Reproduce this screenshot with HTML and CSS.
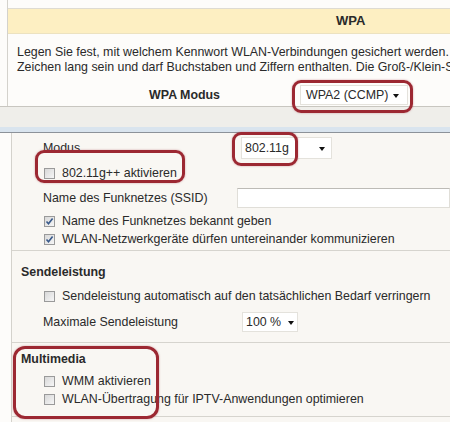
FILE: index.html
```html
<!DOCTYPE html>
<html>
<head>
<meta charset="utf-8">
<link rel="stylesheet" href="styles.css">
</head>
<body>
<div class="page">
  <div class="top">
    <div class="topgap"></div>
    <div class="head">WPA</div>
    <div class="desc">
      <div class="line">Legen Sie fest, mit welchem Kennwort WLAN-Verbindungen gesichert werden. Das Kennwort muss 8 bis 63</div>
      <div class="line">Zeichen lang sein und darf Buchstaben und Ziffern enthalten. Die Groß-/Klein-Schreibung wird beachtet.</div>
    </div>
    <div class="moderow">
      <div class="modelabel">WPA Modus</div>
      <div class="sel sel-wpa"><span>WPA2 (CCMP)</span><span class="arrow"></span></div>
    </div>
  </div>
  <div class="band"></div>
  <div class="stripe"></div>
  <div class="panel">
    <div class="group g1">
      <div class="row r-modus">
        <div class="lbl">Modus</div>
        <div class="sel sel-modus"><span>802.11g</span><span class="arrow"></span></div>
      </div>
      <div class="row r-cb1"><span class="cb"></span><span>802.11g++ aktivieren</span></div>
      <div class="row r-ssid">
        <div class="lbl">Name des Funknetzes (SSID)</div>
        <div class="input"></div>
      </div>
      <div class="row r-cb2"><span class="cb checked"><svg viewBox="0 0 11 11" width="11" height="11"><path d="M2.5 5.5 L4.5 7.8 L8.6 2.6" fill="none" stroke="#3a5a8a" stroke-width="1.6"/></svg></span><span>Name des Funknetzes bekannt geben</span></div>
      <div class="row r-cb3"><span class="cb checked"><svg viewBox="0 0 11 11" width="11" height="11"><path d="M2.5 5.5 L4.5 7.8 L8.6 2.6" fill="none" stroke="#3a5a8a" stroke-width="1.6"/></svg></span><span>WLAN-Netzwerkgeräte dürfen untereinander kommunizieren</span></div>
    </div>
    <div class="group g2">
      <div class="h">Sendeleistung</div>
      <div class="row r-cb4"><span class="cb"></span><span>Sendeleistung automatisch auf den tatsächlichen Bedarf verringern</span></div>
      <div class="row r-max">
        <div class="lbl">Maximale Sendeleistung</div>
        <div class="sel sel-pct"><span>100 %</span><span class="arrow"></span></div>
      </div>
    </div>
    <div class="group g3">
      <div class="h h3">Multimedia</div>
      <div class="row r-cb5"><span class="cb"></span><span>WMM aktivieren</span></div>
      <div class="row r-cb6"><span class="cb"></span><span>WLAN-Übertragung für IPTV-Anwendungen optimieren</span></div>
    </div>
  </div>
  <div class="mark m1"></div>
  <div class="mark m2"></div>
  <div class="mark m3"></div>
  <div class="mark m4"></div>
</div>
</body>
</html>
```
FILE: styles.css
```css
html, body {
  margin: 0;
  padding: 0;
  background: #fdfcfa;
}
.page {
  position: relative;
  width: 450px;
  height: 422px;
  overflow: hidden;
  font-family: "Liberation Sans", Arial, sans-serif;
  font-size: 12.4px;
  color: #2a2a2a;
}
.top {
  margin-left: 7px;
  border-left: 1px solid #d4d2cc;
  height: 106px;
  background: #fdfcfa;
  white-space: nowrap;
  overflow: hidden;
}
.topgap {
  height: 8px;
  border-bottom: 1px solid #dedbd2;
}
.head {
  height: 24px;
  line-height: 24px;
  background: #fdefc2;
  border-bottom: 1px solid #ece2c0;
  font-weight: bold;
  font-size: 13px;
  padding-left: 328px;
}
.desc {
  padding: 11px 0 0 9px;
}
.line {
  height: 15px;
  line-height: 15px;
}
.moderow {
  display: flex;
  align-items: center;
  height: 30px;
  margin-top: 5px;
}
.modelabel {
  font-weight: bold;
  width: 212px;
  text-align: right;
  padding-right: 80px;
}
.sel {
  display: flex;
  align-items: center;
  background: #fff;
  border: 1px solid #e4e2dc;
  height: 20px;
  box-sizing: border-box;
  padding-left: 5px;
  position: relative;
}
.arrow {
  position: absolute;
  top: 8px;
  width: 0;
  height: 0;
  border-left: 3.5px solid transparent;
  border-right: 3.5px solid transparent;
  border-top: 4px solid #111;
}
.sel-wpa {
  width: 108px;
  font-size: 12.4px;
  margin-left: 0;
}
.sel-wpa .arrow { left: 92px; }
.band {
  height: 20px;
  background: #efeeea;
  border-top: 1px solid #c8c6c0;
}
.stripe {
  height: 5px;
  background: #d9e4ee;
  border-bottom: 1px solid #8c9299;
}
.panel {
  margin-left: 11px;
  border-left: 1px solid #d4d2cc;
  background: #f9f7f3;
  height: 300px;
  white-space: nowrap;
}
.group {
  border-bottom: 1px solid #d6d4ce;
}
.row {
  display: flex;
  align-items: center;
}
.lbl {
  padding-left: 31px;
  width: 199px;
}
.row .cb {
  margin-left: 32px;
  margin-right: 7px;
}
.cb {
  display: inline-block;
  flex: none;
  width: 11px;
  height: 11px;
  box-sizing: border-box;
  border: 1px solid #9a9a9a;
  background: linear-gradient(135deg, #d8d8d8, #f6f6f6);
  position: relative;
}
.cb svg {
  position: absolute;
  left: -1px;
  top: -1px;
}
.r-modus { height: 30px; }
.sel-modus { width: 91px; margin-left: -1px; height: 22px; padding-left: 3px; }
.sel-modus .arrow { left: 77px; top: 9px; }
.r-cb1 { height: 20px; }
.r-ssid { height: 28px; margin-top: 1px; }
.input {
  width: 220px;
  height: 20px;
  box-sizing: border-box;
  background: #fff;
  border: 1px solid #e0ded8;
  border-top: 1px solid #bdbbb6;
  margin-left: 1px;
}
.r-cb2 { height: 18px; }
.r-cb3 { height: 18px; padding-bottom: 2px; }
.h {
  font-weight: bold;
  padding-left: 9px;
  height: 18px;
  line-height: 18px;
  padding-top: 12px;
}
.r-cb4 { height: 18px; margin-top: 6px; }
.r-max { height: 30px; margin-top: 2px; padding-bottom: 5px; }
.sel-pct { width: 56px; margin-left: 0; padding-left: 3px; }
.sel-pct .arrow { left: 45px; }
.h3 { padding-top: 7px; }
.r-cb5 { height: 18px; margin-top: 4px; }
.r-cb6 { height: 18px; padding-bottom: 8px; }
.mark {
  position: absolute;
  border: 3px solid #9c2832;
  border-radius: 9px;
  box-shadow: 0 0 2px rgba(170, 60, 70, 0.5);
  box-sizing: border-box;
}
.m1 { left: 292px; top: 80px; width: 121px; height: 33px; }
.m2 { left: 232px; top: 132px; width: 66px; height: 34px; }
.m3 { left: 35px; top: 150px; width: 150px; height: 33px; }
.m4 { left: 13px; top: 346px; width: 146px; height: 73px; border-radius: 12px; }
```
